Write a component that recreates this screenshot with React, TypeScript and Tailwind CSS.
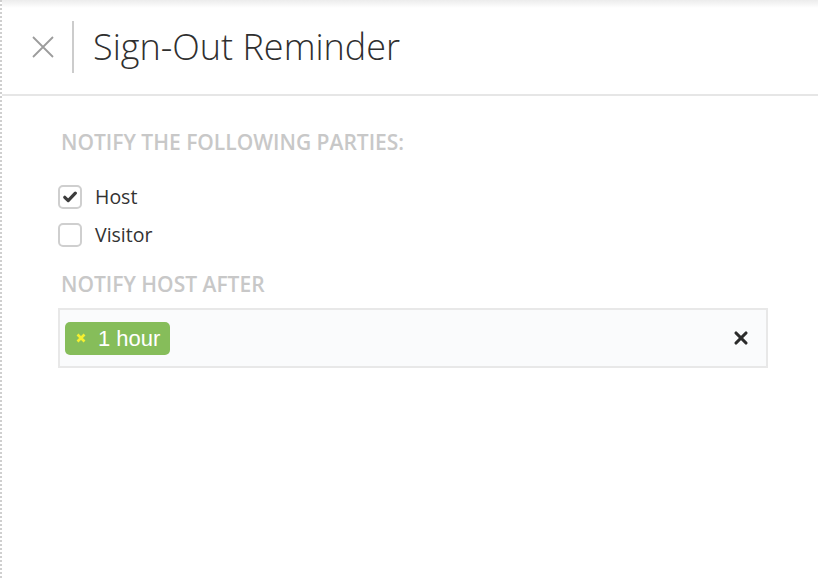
import { X } from 'lucide-react';

function Checkbox({ checked, label }: { checked: boolean; label: string }) {
  return (
    <label className="flex items-center gap-[13px] h-[38px]">
      <span className="w-[24px] h-[24px] rounded-[5px] border-2 border-[#cfcfcf] bg-white grid place-items-center">
        {checked && (
          <svg width="14" height="12" viewBox="0 0 14 12">
            <path d="M1.8 6.3 L5.2 9.6 L12.3 2.2" fill="none" stroke="#3d3d3d" strokeWidth="3.2" strokeLinecap="round" strokeLinejoin="round" />
          </svg>
        )}
      </span>
      <span className="text-[19.5px] text-[#333]">{label}</span>
    </label>
  );
}

export default function App() {
  return (
    <div
      className="w-[818px] h-[578px] bg-white border-l-2 border-dotted border-[#cfcfcf] relative overflow-hidden"
      style={{ fontFamily: '"Open Sans", sans-serif' }}
    >
      <div className="absolute top-0 left-0 right-0 h-[8px] bg-gradient-to-b from-[#ececec] to-transparent" />
      <header className="h-[96px] border-b-2 border-[#e6e6e6] flex items-center">
        <button className="w-[70px] h-[52px] flex items-center pl-[30px]">
          <svg width="22" height="22" viewBox="0 0 22 22">
            <path d="M1 1 L21 21 M21 1 L1 21" stroke="#9c9c9c" strokeWidth="1.8" />
          </svg>
        </button>
        <div className="w-[2px] h-[52px] bg-[#cccccc]" />
        <h1 className="ml-[19px] text-[36px] font-light text-[#2f2f2f]">Sign-Out Reminder</h1>
      </header>

      <main className="pl-[56px] pr-[50px] pt-[32px]">
        <div className="ml-[3px] text-[21px] leading-[28px] font-semibold text-[#c8c8c8] uppercase">Notify the following parties:</div>
        <div className="mt-[22px] flex flex-col">
          <Checkbox checked label="Host" />
          <Checkbox checked={false} label="Visitor" />
        </div>
        <div className="mt-[16px] ml-[3px] text-[21px] leading-[28px] font-semibold text-[#c8c8c8] uppercase">Notify host after</div>
        <div className="mt-[10px] h-[60px] border-2 border-[#e8e8e8] bg-[#fafbfc] flex items-center pl-[5px] pr-[15px]">
          <span
            className="h-[33px] pl-[11px] pr-[10px] rounded-[5px] bg-[#86bd5a] flex items-center gap-[12px] text-white text-[22px]"
            style={{ fontFamily: '"Liberation Sans", Arial, sans-serif' }}
          >
            <svg width="10" height="10" viewBox="0 0 10 10">
              <path d="M1.5 1.5 L8.5 8.5 M8.5 1.5 L1.5 8.5" stroke="#f5f030" strokeWidth="2.6" />
            </svg>
            1 hour
          </span>
          <span className="flex-1" />
          <X size={20} strokeWidth={3.8} className="text-[#2b2b2b]" />
        </div>
      </main>
    </div>
  );
}
